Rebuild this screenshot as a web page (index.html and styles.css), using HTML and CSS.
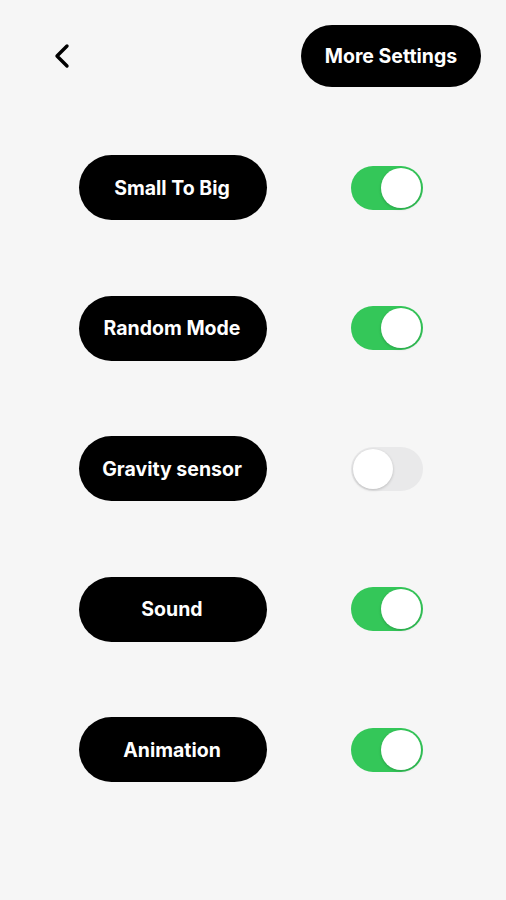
FILE: index.html
```html
<!DOCTYPE html>
<html lang="en">
<head>
    <meta charset="UTF-8">
    <meta name="viewport" content="width=device-width, initial-scale=1.0">
    <title>Settings</title>
    <link rel="stylesheet" href="styles.css">
</head>
<body>
    <div class="settings-page">
        <div class="top-bar">
            <button class="back-button" aria-label="Back">
                <svg width="20" height="26" viewBox="0 0 20 26">
                    <path d="M15 3 L5 13 L15 23" fill="none" stroke="#000" stroke-width="3.4" stroke-linecap="round" stroke-linejoin="round"/>
                </svg>
            </button>
            <button class="more-button">More Settings</button>
        </div>

        <div class="option-list">
            <div class="option-row">
                <div class="option-label">Small To Big</div>
                <div class="toggle on"><span class="knob"></span></div>
            </div>
            <div class="option-row">
                <div class="option-label">Random Mode</div>
                <div class="toggle on"><span class="knob"></span></div>
            </div>
            <div class="option-row">
                <div class="option-label">Gravity sensor</div>
                <div class="toggle"><span class="knob"></span></div>
            </div>
            <div class="option-row">
                <div class="option-label">Sound</div>
                <div class="toggle on"><span class="knob"></span></div>
            </div>
            <div class="option-row">
                <div class="option-label">Animation</div>
                <div class="toggle on"><span class="knob"></span></div>
            </div>
        </div>
    </div>
</body>
</html>
```

FILE: styles.css
```css
* {
    margin: 0;
    padding: 0;
    box-sizing: border-box;
    font-family: 'Inter', 'Liberation Sans', sans-serif;
}
body {
    background-color: #f6f6f6;
    color: #000;
    width: 506px;
    height: 900px;
    overflow: hidden;
}
.top-bar {
    display: flex;
    justify-content: space-between;
    align-items: center;
    padding: 25px 25px 0 52px;
}
.back-button {
    background: none;
    border: none;
    width: 20px;
    height: 26px;
    display: flex;
    cursor: pointer;
}
.more-button {
    width: 180px;
    height: 62px;
    border-radius: 31px;
    border: none;
    background-color: #000;
    color: #fff;
    font-size: 19.5px;
    font-weight: 700;
    cursor: pointer;
}
.option-list {
    display: flex;
    flex-direction: column;
    gap: 75.5px;
    padding: 68px 0 0 79px;
}
.option-row {
    display: flex;
    align-items: center;
    gap: 84px;
}
.option-label {
    width: 188px;
    height: 65px;
    border-radius: 33px;
    background-color: #000;
    color: #fff;
    font-size: 19.5px;
    font-weight: 700;
    display: flex;
    align-items: center;
    justify-content: center;
    padding-right: 2px;
}
.toggle {
    position: relative;
    width: 72px;
    height: 44px;
    border-radius: 22px;
    background-color: #e9e9ea;
}
.toggle.on {
    background-color: #34c759;
}
.knob {
    position: absolute;
    top: 2px;
    left: 2px;
    width: 40px;
    height: 40px;
    border-radius: 50%;
    background-color: #fff;
    box-shadow: 0 1px 3px rgba(0,0,0,0.2);
}
.toggle.on .knob {
    left: 30px;
}
```
